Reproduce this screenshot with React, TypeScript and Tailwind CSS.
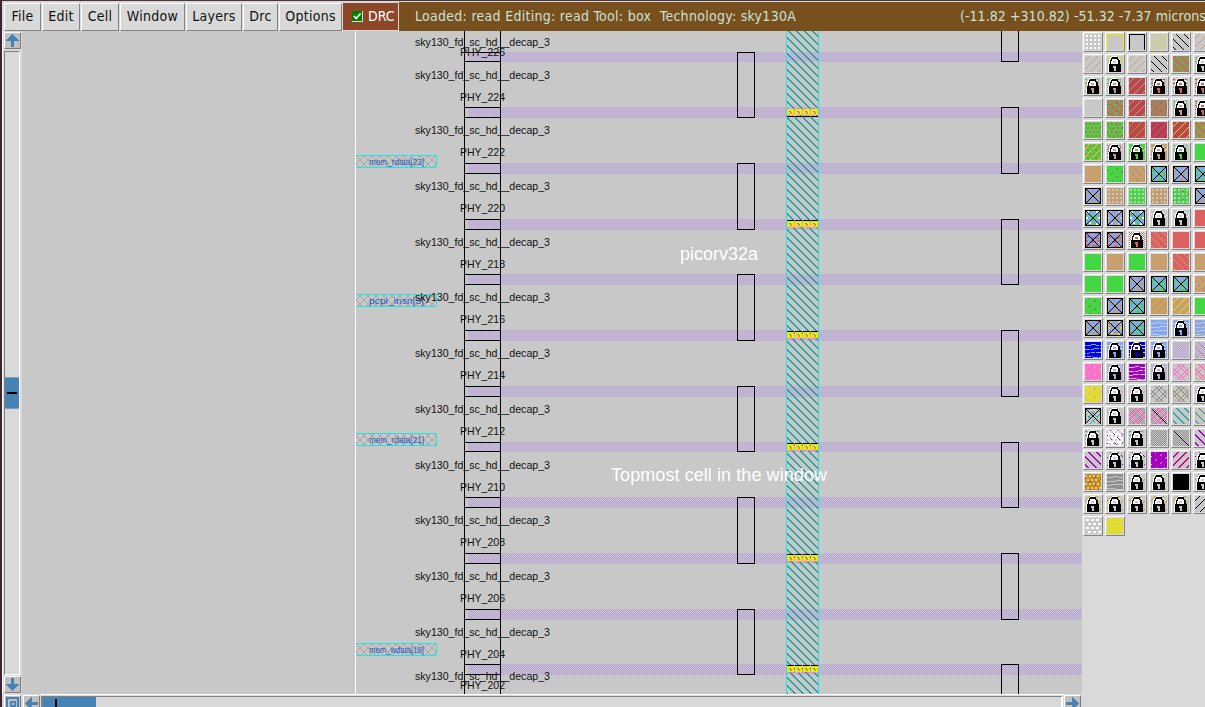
import { ReactNode } from "react";

const G = "#43d843";
const T = "#c8a070";
const R = "#b84850";
const S = "#dc6060";
const B = "#a88060";
const U = "#80a8f8";
const P = "#b8a0dc";
const K = "#ff70c8";
const V = "#a800c0";
const M = "#c80090";
const O = "#c89600";
const Y = "#e8e400";
const E = "#28a8a0";
const N = "#c8c8c8";
const A = "#909090";

type Layer = [kind: string, color: string];

function parse(spec: string): Layer[] {
  const names: Record<string, string> = { G, T, R, S, B, U, P, K, V, M, O, Y, E, N, A, W: "#ffffff", D: "#0000e8", Z: "#000000" };
  return spec.split(" ").map((s) => [s.slice(0, -1), names[s.slice(-1)]]);
}

// Each swatch is a list of layers: a kind followed by a one-letter colour.
const palette: string[][] = [
  ["dotW", "boxY", "boxZ", "bsY", "bsZ", "fsT"],
  ["fsT", "brY lockN", "fsT", "bsZ", "fillB bsG", "speckG speckbB lockN"],
  ["speckG speckbB lockT", "speckG speckbB lockT", "fillR fsT", "speckR speckbR lockS", "speckR speckbY lockS", "speckR speckbR lockS"],
  ["fillN", "fillB xdG dashR", "fillR fsT", "fillB dashR", "speckG speckbB lockT", "speckR speckbR lockS"],
  ["fillG dotsS", "fillG dotsS dashR", "fillR fsO", "fillR fsM", "fillR fsY", "fillB bsG fsO"],
  ["fillG dotsS fsY", "speckB speckbM lockT", "fillG dashW lockG", "fillT dashW lockT", "speckG speckbG lockG", "fillG"],
  ["fillT", "fillG dashR", "fillT dashbB", "fillU waveG cross2Z", "fillU waveT cross2Z", "fillU waveG cross2Z"],
  ["fillU waveT cross2Z", "fillT dotN", "fillG dotN", "fillT dotN dashbB", "fillG dotN dashR", "fillU waveT cross2Z"],
  ["fillU waveG brW cross2Z", "fillU waveT brN cross2Z", "fillU waveG brW cross2Z", "dashW lockN", "dashW lockN", "fillS"],
  ["fillU waveS cross2Z", "fillU waveS brT cross2Z", "fillW checkS lockS", "fillS bsT", "fillS", "fillS"],
  ["fillG", "fillT", "fillG", "fillT", "fillS bsT", "fillT"],
  ["fillG", "fillG", "fillU waveT cross2Z", "fillU waveG cross2Z", "fillU waveG cross2Z", "fillT dashbB"],
  ["fillG dashR", "fillU waveT cross2Z", "fillU waveG cross2Z", "fillT fsO", "fillT fsY", "fillG"],
  ["fillU waveT cross2Z", "fillU waveT brY cross2Z", "fillU waveG cross2Z", "fillU slitN", "fillU slitN lockU", "fillU slitN fsT"],
  ["fillD slitU xdD", "fillU slitN lockU", "fillD slitN lockD", "fillU slitN lockU", "checkP", "checkP bsT"],
  ["fillK dashN", "checkP lockP", "fillV slitN dashV", "checkP lockP", "ringK", "ringK bsT"],
  ["fillY dotsN dashK", "dashK lockN", "dashK lockN", "ringA", "ringA bsT", "dashK lockN"],
  ["xdE boxZ crossZ", "dashK lockN", "checkA ringK", "checkA ringK onebsZ", "bs2E", "bs2E bsT"],
  ["speckE lockN", "fillW dotsN dashbV", "speckE lockN", "checkA", "checkA onebsZ", "bs2V"],
  ["bs2V", "dashbV lockN", "dashbV lockN", "fillV dashN", "fs2M", "dashM lockN"],
  ["fillO dotsN dashM", "fillA slitN", "dashA lockN", "dashbY lockN", "fillZ", "dashbA lockN"],
  ["fsO lockN", "fsO lockN", "fsO lockN", "fsO lockN", "fsO lockN", "fsZ"],
  ["fillN latW", "fillY dotsN"],
];

const fs = "M-1 6L6-1M-1 14L14-1M4 17L17 4M12 17L17 12";
const bs = "M2-1L17 14M10-1L17 6M-1 4L12 17M-1 12L4 17";
const fsWide = "M-1 6.5L6.5-1M-1 14.5L14.5-1M4.5 17L17 4.5M12.5 17L17 12.5";
const bsWide = "M2.500-1L17 13.500M10.500-1L17 5.500M-1 3.500L12.500 17M-1 11.500L4.500 17";

function layer([kind, c]: Layer, i: number): ReactNode {
  const line = (d: string, w = 1, dash?: string) => (
    <path key={i} d={d} stroke={c} strokeWidth={w} strokeDasharray={dash} fill="none" />
  );
  switch (kind) {
    case "fill":
      return <rect key={i} width="16" height="16" fill={c} />;
    case "dot":
      return line("M1 2h14M1 6h14M1 10h14M1 14h14", 2, "2 2");
    case "dots":
      return line("M0 2h16M2 6h14M0 10h16M2 14h14", 2, "2 2");
    case "lat":
      return line("M1 2h15M3 6h13M1 10h15M3 14h13", 2, "3 2");
    case "box":
      return line("M.5 16V.5h15V16", 1);
    case "fs":
      return line(fs);
    case "fs2":
      return line(fsWide, 1.2);
    case "bs":
      return line(bs);
    case "bs2":
      return line(bsWide, 1.2);
    case "onebs":
      return line("M1 1L16 16", 1);
    case "xd":
      return line(fs + bs, 1.2, "4 2");
    case "dash":
      return line(fs, 1.1, "3 4");
    case "dashb":
      return line(bs, 1.1, "3 3");
    case "br":
      return line("M1 2h3M11 2h3M1 8h2M13 8h2M4 13h2M11 14h2", 1.5);
    case "check":
      return line(Array.from({ length: 16 }, (_, y) => `M${y % 2} ${y + 0.5}H16`).join(""), 1, "1 1");
    case "speck":
      return line("M0 1.5h16M0 5.5h16M0 9.5h16M0 13.5h16", 1, "2 2");
    case "speckb":
      return line("M1 3.5h15M1 7.5h15M1 11.5h15M1 15.5h15", 1, "1 2");
    case "wave":
      return line("M0 1h6M9 1h7M0 5h4M6 6h8M0 9h3M5 10h6M12 9h4M0 13h5M7 14h7", 2);
    case "slit":
      return line("M0 3.5h6M6 2.5h5M11 3.5h5M0 7.5h9M9 6.500h7M0 11.5h4M4 10.5h12M0 14.5h8M8 15.5h8", 1);
    case "ring":
      return line("M-1 9L9-1M-1 7L9 17M7-1L17 9M7 17L17 7M3-1L17 13M-1 3L13 17M-1 13L13-1M3 17L17 3", 1);
    case "cross":
      return line("M0 0L16 16M16 0L0 16");
    case "cross2":
      return line("M.5 16V.5H15.5V16M1 15.5H15M1 1L15 15M15 1L1 15", 1);
    case "lock":
      return (
        <g key={i}>
          <path d="M2 8V4L4 1L6 0h3l2 1 2 3v4h1v8H1V8z" fill="#fff" />
          <path d="M3.5 9V5L5.5 2h4.5L12 5V9" fill="none" stroke="#000" strokeWidth="1.5" />
          <path d="M6 5h3v2H6z" fill={c} />
          <path d="M2 8h12V16H2z" fill="#000" />
          <path d="M6 10h3v2H8.5V15H7V12H6z" fill={c} />
        </g>
      );
  }
  return null;
}

function Swatch({ spec }: { spec: string }) {
  return (
    <div className="h-5 w-5 border border-t-white border-l-white border-r-[#828282] border-b-[#828282] bg-[#d9d9d9] p-px">
      <svg width="16" height="16" viewBox="0 0 16 16" shapeRendering="crispEdges" className="block bg-[#c8c8c8]">
        {parse(spec).map(layer)}
      </svg>
    </div>
  );
}

const tops = [52, 107, 163, 219, 274, 330, 386, 442, 497, 553, 609, 664];
const bottoms = [61, 117, 173, 229, 284, 340, 396, 451, 507, 563, 619, 674];
const cellY = [42, 75, 130, 186, 242, 297, 353, 409, 465, 520, 576, 632, 676];
const phyY = [52, 97, 152, 208, 264, 319, 375, 431, 487, 542, 598, 654, 685];
const pins: [number, string][] = [
  [155, "mem_rdata[23]"],
  [294, "pcpi_insn[3]"],
  [433, "mem_rdata[21]"],
  [643, "mem_wdata[18]"],
];

const stripes = Array.from({ length: 88 }, (_, i) => `M786 ${i * 8 - 3.5}l34 34`).join("");

function railPath(top: number, bottom: number) {
  let d = "";
  for (let y = top; y <= bottom; y++) d += `M${469 - (y % 2)} ${y + 0.5}H1082`;
  return d;
}

function Layout() {
  return (
    <svg width="1060" height="663" viewBox="22 31 1060 663" className="block shrink-0 bg-[#c8c8c8]" fontFamily="'Liberation Sans', Arial, sans-serif">
      <defs>
        <clipPath id="strap">
          <rect x="787" y="31" width="31" height="663" />
        </clipPath>
        <pattern id="mesh" width="8" height="8" patternUnits="userSpaceOnUse">
          <path d="M0 0L8 8M8 0L0 8" stroke="#a4a4a4" strokeWidth="1" />
        </pattern>
      </defs>
      <g shapeRendering="crispEdges">
        {tops.map((t, i) => (
          <path key={t} d={railPath(t, bottoms[i])} stroke="#b8a0dc" strokeDasharray="1 1" />
        ))}
        <path d="M355.5 31V694" stroke="#fff" />
        <path d={stripes} stroke="#20a29c" strokeWidth="1.2" clipPath="url(#strap)" />
        <path d="M786.5 31V694M818.5 31V694" stroke="#20e4e4" />
        <path d="M464.5 31V694M500.5 31V694" stroke="#000" />
        {tops.map((t, i) => (
          <path key={t} d={`M464 ${t + 0.5}H501M464 ${bottoms[i] + 0.5}H501`} stroke="#000" />
        ))}
        <path d="M1001.5 31V61.5H1018.5V31" fill="none" stroke="#000" />
        {tops.map((t, i) => (
          <rect key={t} x={i % 2 ? 1001.5 : 737.5} y={t + 0.5} width="17" height={i === 11 ? 60 : bottoms[i + 1] - t} fill="none" stroke="#000" />
        ))}
        {tops.filter((_, i) => i % 2).map((t, i) => (
          <g key={t}>
            <path d={`M787 ${t + 1.5}H818M787 ${t + 8.5}H818`} stroke="#ff78c8" strokeWidth="1" strokeDasharray="3 2" />
            <path d={`M787 ${t + 5}H818`} stroke="#f4e800" strokeWidth="6" strokeDasharray="7 1" />
            <path d={`M789 ${t + 4.5}H817`} stroke="#50a8a0" strokeDasharray="2 6" />
            <path d={`M790 ${t + 6}H817`} stroke="#e080a0" strokeWidth="2" strokeDasharray="2 6" />
            <path d={i ? `M787 ${t + 1.5}H818` : `M787 ${t + 9.5}H818`} stroke="#000" strokeDasharray="7 1" />
          </g>
        ))}
        {pins.map(([y]) => (
          <g key={y}>
            <rect x="356" y={y} width="80" height="12" fill="url(#mesh)" />
            <path d={`M356 ${y + 0.5}H436.5V${y + 12.5}H356`} fill="none" stroke="#20e4e4" />
          </g>
        ))}
      </g>
      {pins.map(([y, s]) => (
        <text key={y} x="369" y={y + 10} fontSize="9" textLength="55" lengthAdjust="spacingAndGlyphs" fill="#2058c0">
          {s}
        </text>
      ))}
      <g fill="#101010" fontSize="11">
        {cellY.map((y) => (
          <text key={y} x="415" y={y + 4} textLength="135" lengthAdjust="spacingAndGlyphs">
            sky130_fd_sc_hd__decap_3
          </text>
        ))}
        {phyY.map((y, i) => (
          <text key={y} x="460" y={y + 4} textLength="45" lengthAdjust="spacingAndGlyphs">
            {`PHY_${226 - i * 2}`}
          </text>
        ))}
      </g>
      <g fill="#fff" fontSize="18">
        <text x="680" y="260" textLength="78">picorv32a</text>
        <text x="611" y="481" textLength="216">Topmost cell in the window</text>
      </g>
    </svg>
  );
}

function ArrowButton({ turn }: { turn: string }) {
  return (
    <div className="flex h-[17px] w-[17px] shrink-0 items-center justify-center border border-t-white border-l-white border-r-[#7c7c7c] border-b-[#7c7c7c] bg-[#c0c0c0]">
      <svg width="15" height="15" viewBox="0 0 15 15" className={turn} shapeRendering="crispEdges">
        <path d="M7.5 1L14 8H9v6H6V8H1z" fill="#4682b4" />
      </svg>
    </div>
  );
}

const menus: [string, string][] = [
  ["File", "w-[37px]"],
  ["Edit", "w-[38px]"],
  ["Cell", "w-[38px]"],
  ["Window", "w-[65px]"],
  ["Layers", "w-14"],
  ["Drc", "w-[35px]"],
  ["Options", "w-[63px]"],
];

export default function App() {
  return (
    <div className="flex h-[707px] w-[1205px] overflow-hidden bg-[#d9d9d9]">
      <div className="w-[2px] shrink-0 bg-[#3c2430]" />
      <div className="flex w-[1203px] shrink-0 flex-col">
        <div className="h-px shrink-0 bg-[#4c3438]" />
        <div className="h-px shrink-0 bg-[#d9d9d9]" />
        <header className="flex h-[29px] shrink-0 gap-px pl-0.5 font-['DejaVu_Sans_Condensed','DejaVu_Sans',sans-serif] text-[14px] leading-[24px] tracking-[0.28px] text-[#101010]">
          {menus.map(([name, width]) => (
            <button
              key={name}
              className={`${width} mt-px flex h-7 shrink-0 justify-center border border-t-white border-l-white border-r-[#828282] border-b-[#828282] bg-[#d9d9d9] whitespace-nowrap`}
            >
              {name}
            </button>
          ))}
          <div className="mt-px flex h-[27px] w-[55px] shrink-0 items-center gap-[5px] bg-[#8c4628] pl-[9px] text-white">
            <svg width="11" height="11" viewBox="0 0 11 11" className="shrink-0">
              <path d="M0 0h11v11H0z" fill="#d9d9d9" />
              <path d="M0 0h10v10H0z" fill="#008000" />
              <path d="M2 5l2.2 2.5L8.5 2.5" fill="none" stroke="#fff" strokeWidth="1.8" />
            </svg>
            <span className="-mt-0.5 tracking-normal">DRC</span>
          </div>
          <div className="flex h-[29px] w-[806px] shrink-0 justify-between bg-[#78501e] pl-4 leading-[29px] whitespace-pre text-[#c8e0d8]">
            <span>Loaded: read Editing: read Tool: box  Technology: sky130A</span>
            <span className="w-[245px] tracking-[0.05px]">(-11.82 +310.82) -51.32 -7.37 microns</span>
          </div>
        </header>
        <div className="flex h-[663px] shrink-0">
          <div className="flex w-5 shrink-0 flex-col border-l border-white pt-px pl-px">
            <ArrowButton turn="" />
            <div className="mt-0.5 flex h-[624px] w-4 flex-col border border-t-[#828282] border-r-white border-b-white border-l-[#828282] pt-[325px]">
              <div className="flex h-8 items-center justify-center border-y border-[#7c9cb8] bg-[#4682b4]">
                <div className="h-0.5 w-2.5 bg-black" />
              </div>
            </div>
            <div className="mt-px">
              <ArrowButton turn="rotate-180" />
            </div>
          </div>
          <Layout />
          <aside className="grid h-[510px] w-[132px] shrink-0 grid-cols-[repeat(6,20px)] content-start gap-0.5 pt-px pl-px">
            {palette.flat().map((spec, i) => (
              <Swatch key={i} spec={spec} />
            ))}
          </aside>
        </div>
        <div className="flex h-[13px] shrink-0 overflow-hidden pl-0.5">
          <div className="mt-px h-[17px] w-[17px] shrink-0 border border-t-white border-l-white border-r-[#7c7c7c] border-b-[#7c7c7c] bg-[#c0c0c0]">
            <svg width="15" height="15" viewBox="0 0 15 15" shapeRendering="crispEdges">
              <path d="M2 2h11v12H2zM5.5 5.5h4v4h-4z" fill="none" stroke="#4682b4" strokeWidth="2" />
            </svg>
          </div>
          <div className="mt-px ml-0.5">
            <ArrowButton turn="-rotate-90" />
          </div>
          <div className="ml-px flex h-[18px] w-[1023px] shrink-0 border-t border-white pt-px">
            <div className="flex w-[1022px] border-2 border-t border-t-[#828282] border-r-white border-l-[#828282]">
              <div className="h-4 w-[53px] bg-[#4682b4] pt-0.5 pl-3">
                <div className="h-4 w-0.5 bg-black" />
              </div>
            </div>
          </div>
          <div className="mt-px">
            <ArrowButton turn="rotate-90" />
          </div>
        </div>
      </div>
    </div>
  );
}
